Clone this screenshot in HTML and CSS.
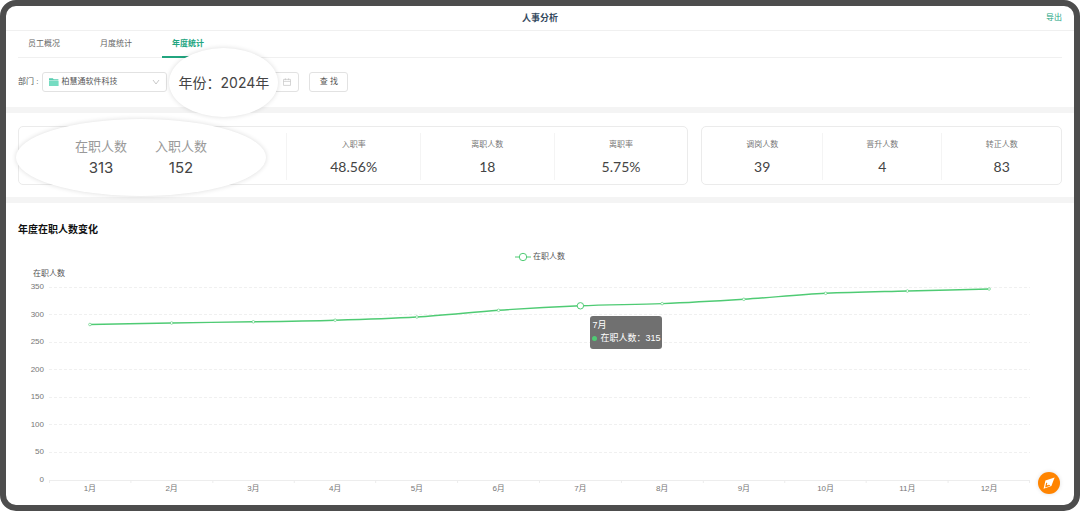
FILE: index.html
```html
<!DOCTYPE html>
<html lang="zh-CN">
<head>
<meta charset="utf-8">
<meta name="viewport" content="width=device-width, initial-scale=1">
<title>人事分析</title>
<link rel="stylesheet" href="styles.css">
</head>
<body>
<div class="frame">
  <header class="topbar">
    <h1 class="topbar-title">人事分析</h1>
    <a class="export" href="#export">导出</a>
  </header>

  <nav class="tabs">
    <a class="tab" href="#overview">员工概况</a>
    <a class="tab" href="#month">月度统计</a>
    <a class="tab tab-active" href="#year" aria-current="page">年度统计</a>
  </nav>

  <form class="filters">
    <label for="dept">部门 :</label>
    <div class="control dept">
      <svg class="folder" viewBox="0 0 10 8" aria-hidden="true"><path d="M0 .2h3.8l.9 1.1H9.4v1.2H0z" fill="#58cdb0"/><path d="M0 3h9.6V8H0z" fill="#76dcc2"/></svg>
      <select id="dept"><option>柏慧通软件科技</option></select>
      <svg class="chevron" viewBox="0 0 8 8" aria-hidden="true"><path d="M1 2l3 4 3-4" fill="none" stroke="#bbb" stroke-width=".8"/></svg>
    </div>
    <div class="control year">
      <input id="year" type="text">
      <svg class="calendar" viewBox="0 0 8 8" aria-hidden="true"><path d="M.5 1.4h7v6h-7zM.5 3.4h7M2.4.3v1.8M5.6.3v1.8" fill="none" stroke="#c4c4c4" stroke-width=".7"/></svg>
      <label class="bubble year-bubble" for="year">年份：2024年</label>
    </div>
    <button class="search" type="button">查 找</button>
  </form>

  <section class="stats">
    <div class="card card-wide">
      <dl class="bubble people-bubble">
        <div><dt>在职人数</dt><dd>313</dd></div>
        <div><dt>入职人数</dt><dd>152</dd></div>
      </dl>
      <dl class="cells cells-offset">
        <div class="cell"><dt>入职率</dt><dd>48.56%</dd></div>
        <div class="cell"><dt>离职人数</dt><dd>18</dd></div>
        <div class="cell"><dt>离职率</dt><dd>5.75%</dd></div>
      </dl>
    </div>
    <div class="card card-narrow">
      <dl class="cells">
        <div class="cell"><dt>调岗人数</dt><dd>39</dd></div>
        <div class="cell"><dt>晋升人数</dt><dd>4</dd></div>
        <div class="cell"><dt>转正人数</dt><dd>83</dd></div>
      </dl>
    </div>
  </section>

  <section class="chart">
    <h2 class="chart-title">年度在职人数变化</h2>
    <div class="legend">
      <svg class="legend-mark" viewBox="0 0 16 10" aria-hidden="true"><path d="M0 5h16" stroke="#4fcb74"/><circle cx="8" cy="5" r="3.7" fill="#fff" stroke="#4fcb74"/></svg>
      <span>在职人数</span>
    </div>
    <div class="axis-name">在职人数</div>
    <div class="graph">
      <div class="y-axis"><span>350</span><span>300</span><span>250</span><span>200</span><span>150</span><span>100</span><span>50</span><span>0</span></div>
      <div class="plot">
        <svg class="plot-lines" viewBox="0 0 982 193" preserveAspectRatio="none" aria-hidden="true">
          <path class="grid-line" d="M0 .5H982M0 27.5H982M0 55.5H982M0 82.5H982M0 110.5H982M0 137.5H982M0 165.5H982"/>
          <path class="axis-line" d="M0 193.5H982M.5 193v3M82 193v3M164 193v3M245.5 193v3M327 193v3M409 193v3M491 193v3M573 193v3M655 193v3M736.5 193v3M818 193v3M900 193v3M981.5 193v3"/>
          <path class="series" d="M40.9 37.5C68 37 95.7 36.4 122.75 36S177.6 35.2 204.6 34.8S259.4 34 286.4 33.2S341.2 31.5 368.25 30S423.1 25.2 450.1 23.3S504.9 19.9 531.9 18.8S586.7 17.6 613.75 16.6S668.6 14 695.6 12.3S750.4 7.5 777.4 6.3S832.2 4.7 859.25 4S914 2.7 941.1 2"/>
        </svg>
        <svg class="plot-points" aria-hidden="true">
          <circle cx="4.17%" cy="37.5" r="1.3"/><circle cx="12.5%" cy="36" r="1.3"/><circle cx="20.83%" cy="34.8" r="1.3"/><circle cx="29.17%" cy="33.2" r="1.3"/><circle cx="37.5%" cy="30" r="1.3"/><circle cx="45.83%" cy="23.3" r="1.3"/><circle class="hovered" cx="54.17%" cy="18.8" r="3.2"/><circle cx="62.5%" cy="16.6" r="1.3"/><circle cx="70.83%" cy="12.3" r="1.3"/><circle cx="79.17%" cy="6.3" r="1.3"/><circle cx="87.5%" cy="4" r="1.3"/><circle cx="95.83%" cy="2" r="1.3"/>
        </svg>
        <div class="tooltip" role="tooltip">
          <div>7月</div>
          <div class="tooltip-row"><i class="dot"></i><span>在职人数：315</span></div>
        </div>
      </div>
      <div class="x-axis"><span>1月</span><span>2月</span><span>3月</span><span>4月</span><span>5月</span><span>6月</span><span>7月</span><span>8月</span><span>9月</span><span>10月</span><span>11月</span><span>12月</span></div>
    </div>
  </section>

  <button class="fab" type="button" aria-label="导航">
    <svg viewBox="0 0 22 22" aria-hidden="true"><path d="M16.6 5.4L13.4 13.9 5.6 16.7 7.4 8.4z" fill="#fff"/><path d="M8.2 10.4l4.2 3.3-5.3 1.7z" fill="#ff8400"/><circle cx="9.9" cy="12.2" r="1" fill="#fff"/></svg>
  </button>
</div>
</body>
</html>
```
FILE: styles.css
```css
* { box-sizing: border-box; }

body {
  margin: 0;
  background: #fff;
  color: #555;
  font: 8px/12px "Liberation Sans", "Noto Sans CJK SC", sans-serif;
}

h1, h2, dl, dd { margin: 0; }
a { text-decoration: none; }

select, input, button { font: inherit; color: inherit; }

.frame {
  position: relative;
  display: flex;
  flex-direction: column;
  min-height: 100vh;
  border: 6px solid #4d4d4d;
  border-radius: 16px;
  background: #fff;
}

.topbar {
  display: grid;
  grid-template-columns: 1fr auto 1fr;
  align-items: center;
  height: 25px;
  padding: 0 12px;
  border-bottom: 1px solid #f0f0f0;
}
.topbar-title { grid-column: 2; font-size: 9px; font-weight: 700; color: #34495e; }
.export { justify-self: end; color: #22a57f; }

.tabs {
  display: flex;
  gap: 20px;
  height: 27px;
  margin: 0 12px;
  border-bottom: 1px solid #f0f0f0;
}
.tab { padding: 7px 10px 0; color: #666; }
.tab-active { border-bottom: 1px solid #22a57f; box-shadow: 0 1px #22a57f; color: #22a57f; font-weight: 700; }

.filters {
  display: flex;
  align-items: center;
  height: 49px;
  padding: 0 12px 1px;
}
.control { position: relative; height: 20px; }
.control select, .control input, .search {
  display: block;
  width: 100%;
  height: 20px;
  border: 1px solid #e2e2e2;
  border-radius: 3px;
  background: #fff;
}
.dept { width: 125px; margin-left: 4px; }
.dept select { padding: 0 20px 0 18px; appearance: none; }
.folder { position: absolute; left: 7px; top: 6px; width: 10px; height: 8px; }
.chevron { position: absolute; right: 7px; top: 6px; width: 8px; height: 8px; }
.year { width: 122px; margin: 0 10px; }
.calendar { position: absolute; right: 8px; top: 6px; width: 8px; height: 8px; }
.filters .search { width: 39px; padding: 0; }

.bubble {
  position: absolute;
  z-index: 1;
  display: flex;
  justify-content: center;
  border-radius: 50%;
  background: #fff;
  box-shadow: 0 0 5px rgba(0, 0, 0, .14);
  font-family: Inter, "Noto Sans CJK SC", sans-serif;
}
.year-bubble {
  left: -8px;
  top: -24px;
  align-items: center;
  width: 109px;
  height: 69px;
  font-size: 14px;
  line-height: 20px;
  color: #444;
  white-space: nowrap;
}

.stats {
  display: flex;
  gap: 13px;
  padding: 13px 12px 12px;
  border: solid #f4f4f4;
  border-width: 6px 0;
}
.card { position: relative; border: 1px solid #ebebeb; border-radius: 5px; }
.card-wide { flex: 671; }
.card-narrow { flex: 360; }
.cells { display: grid; grid-template-columns: repeat(3, 1fr); padding: 6px 0 4px; text-align: center; }
.cells-offset { margin-left: 40%; }
.cell { padding-top: 6px; border-left: 1px solid #f4f4f4; }
.card-narrow .cell:first-child { border-left: 0; }
.cell dt { color: #777; }
.cell dd { margin-top: 2px; color: #444; font-family: Lato, sans-serif; font-size: 14px; line-height: 27px; }

.people-bubble {
  left: -3px;
  top: -8px;
  gap: 28px;
  width: 250px;
  height: 77px;
  padding-top: 17px;
  text-align: center;
}
.people-bubble dt { font-size: 13px; line-height: 20px; color: #999; }
.people-bubble dd { font-size: 15px; line-height: 24px; color: #444; }

.chart { flex: 1; padding: 19px 12px 8px; }
.chart-title { color: #111; font-size: 10px; line-height: 16px; font-weight: 700; }
.legend { display: flex; justify-content: center; align-items: center; gap: 2px; margin-top: 13px; }
.legend-mark { width: 16px; height: 10px; }
.axis-name { margin: 5px 0 0 15px; }

.graph {
  display: grid;
  grid-template-columns: 26px 1fr;
  column-gap: 5px;
  margin: 7px 32px 0 0;
  color: #777;
}
.y-axis { display: flex; flex-direction: column; justify-content: space-between; margin: -6px 0; text-align: right; }
.plot { position: relative; height: 193px; }
.plot svg { position: absolute; inset: 0; width: 100%; height: 100%; overflow: visible; }
.plot path { fill: none; vector-effect: non-scaling-stroke; }
.plot .grid-line { stroke: #f0f0f0; stroke-dasharray: 3 2; }
.plot .axis-line { stroke: #ededed; }
.plot .series { stroke: #4fcb74; stroke-width: 1.4; }
.plot-points { fill: #fff; stroke: #4fcb74; stroke-width: .6; }
.hovered { stroke-width: 1; }
.x-axis { grid-column: 2; display: grid; grid-template-columns: repeat(12, 1fr); padding-top: 3px; text-align: center; }

.tooltip {
  position: absolute;
  left: calc(54.17% + 10px);
  top: 29px;
  padding: 3px 2px 4px;
  border-radius: 3px;
  background: #707070;
  color: #fff;
  font-size: 9px;
  line-height: 13px;
  white-space: nowrap;
}
.tooltip-row { display: flex; align-items: center; gap: 3px; }
.dot { width: 5px; height: 5px; border-radius: 50%; background: #4fcb74; }

.fab {
  position: absolute;
  right: 14px;
  bottom: 11px;
  width: 22px;
  height: 22px;
  padding: 0;
  border: 0;
  border-radius: 50%;
  background: #ff8400;
  box-shadow: 0 0 4px rgba(0, 0, 0, .12);
}
.fab svg { display: block; width: 100%; height: 100%; }
```
